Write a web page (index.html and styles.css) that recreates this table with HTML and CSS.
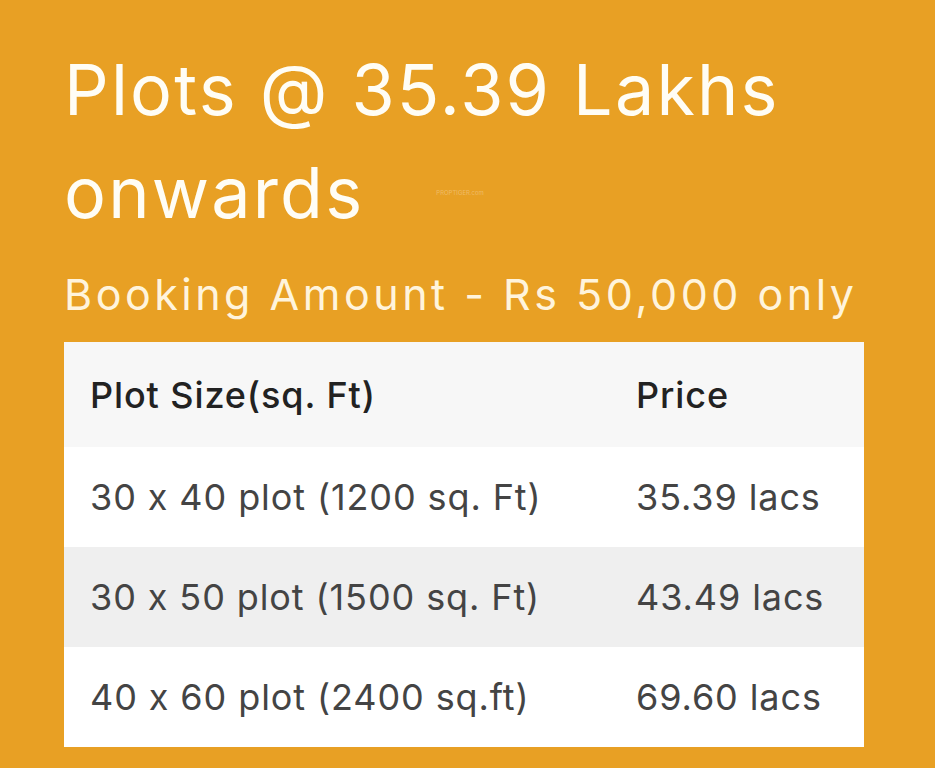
FILE: index.html
```html
<!DOCTYPE html>
<html lang="en">
<head>
  <meta charset="UTF-8" />
  <meta name="viewport" content="width=device-width, initial-scale=1.0"/>
  <title>Plots @ 35.39 Lakhs onwards</title>
  <link rel="stylesheet" href="styles.css">
</head>
<body>
  <div class="offer">
    <h1 class="offer-title">
      <span class="title-line">Plots @ 35.39 Lakhs</span>
      <span class="title-line">onwards <span class="watermark">PROPTIGER.com</span></span>
    </h1>
    <p class="offer-sub">Booking Amount - Rs 50,000 only</p>
    <table class="price-table">
      <thead>
        <tr>
          <th class="col-size">Plot Size(sq. Ft)</th>
          <th>Price</th>
        </tr>
      </thead>
      <tbody>
        <tr>
          <td>30 x 40 plot (1200 sq. Ft)</td>
          <td>35.39 lacs</td>
        </tr>
        <tr>
          <td>30 x 50 plot (1500 sq. Ft)</td>
          <td>43.49 lacs</td>
        </tr>
        <tr>
          <td>40 x 60 plot (2400 sq.ft)</td>
          <td>69.60 lacs</td>
        </tr>
      </tbody>
    </table>
  </div>
</body>
</html>
```

FILE: styles.css
```css
body {
  margin: 0;
  font-family: 'Inter', 'DejaVu Sans', sans-serif;
  font-feature-settings: "calt" 0;
  background: #e8a024;
  color: #fff;
}
.offer {
  padding: 38px 0 0 64px;
}
.offer-title {
  margin: 0;
  font-size: 70px;
  font-weight: 400;
  line-height: 103px;
  letter-spacing: 2.2px;
  color: #fffdf5;
}
.title-line {
  display: flex;
  align-items: center;
  width: fit-content;
}
/* faint site watermark next to the heading */
.watermark {
  margin: 0 0 0 72px;
  font-size: 6px;
  line-height: 8px;
  letter-spacing: 0;
  color: rgba(255, 255, 255, 0.3);
}
.offer-sub {
  margin: 22px 0 20px;
  font-size: 43px;
  line-height: 56px;
  letter-spacing: 3.5px;
  color: #fff4dc;
}
.price-table {
  width: 800px;
  border-collapse: collapse;
  background: #fff;
  color: #444;
  font-size: 36px;
  letter-spacing: 0.9px;
}
.price-table th,
.price-table td {
  height: 100px;
  padding: 0 0 0 26px;
  text-align: left;
}
.price-table th {
  height: 105px;
  font-weight: 500;
  color: #222;
  background: #f7f7f7;
}
.col-size {
  width: 520px;
}
.price-table tbody tr:nth-child(even) td {
  background: #efefef;
}
```
